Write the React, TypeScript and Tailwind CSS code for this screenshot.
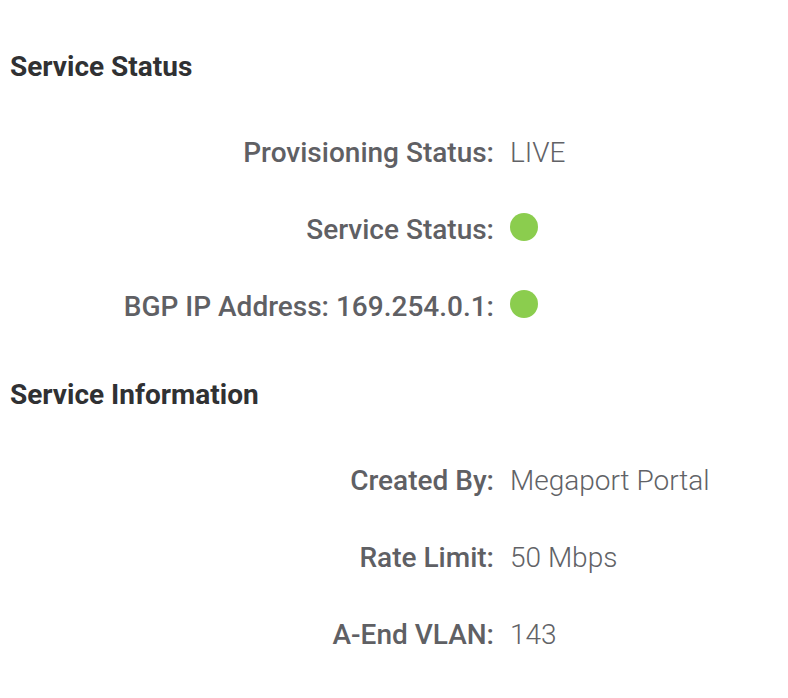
const statusRows = [
  { label: 'Provisioning Status:', value: 'LIVE' },
  { label: 'Service Status:', dot: true },
  { label: 'BGP IP Address: 169.254.0.1:', dot: true },
]

const infoRows = [
  { label: 'Created By:', value: 'Megaport Portal' },
  { label: 'Rate Limit:', value: '50 Mbps' },
  { label: 'A-End VLAN:', value: '143' },
]

type Row = { label: string; value?: string; dot?: boolean }

function DetailRow({ row }: { row: Row }) {
  return (
    <div className="flex h-[77px] items-center">
      <div className="w-[494px] text-right font-medium text-[#5f6064]">{row.label}</div>
      <div className="ml-[16px] flex items-center font-light text-[#616266]">
        {row.dot ? (
          <span className="-mt-[6px] block h-[28px] w-[28px] rounded-full bg-[#8bcd4e]" />
        ) : (
          row.value
        )}
      </div>
    </div>
  )
}

function Section({ title, rows }: { title: string; rows: Row[] }) {
  return (
    <section>
      <h2 className="pl-[10px] text-[28px] leading-8 font-bold text-[#303133]">{title}</h2>
      <div className="mt-[31px]">
        {rows.map((r) => (
          <DetailRow key={r.label} row={r} />
        ))}
      </div>
    </section>
  )
}

export default function App() {
  return (
    <div className="min-h-screen bg-white pt-[51px] text-[28px] leading-8 font-['Roboto',sans-serif]">
      <Section title="Service Status" rows={statusRows} />
      <div className="mt-[34px]">
        <Section title="Service Information" rows={infoRows} />
      </div>
    </div>
  )
}
